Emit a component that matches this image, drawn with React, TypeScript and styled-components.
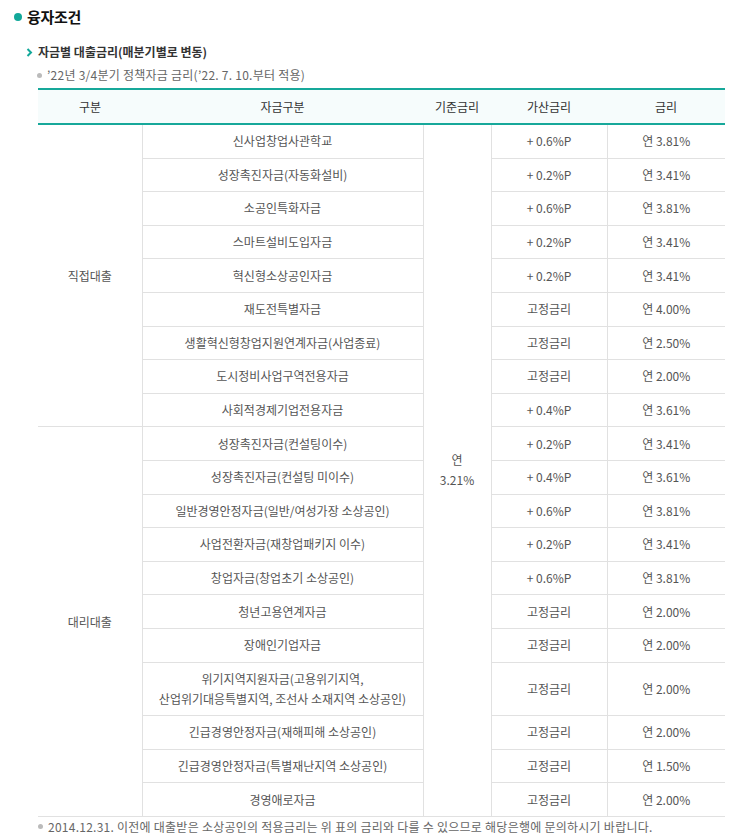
import React from "react";
import styled, { createGlobalStyle } from "styled-components";

const Global = createGlobalStyle`
  html, body { margin: 0; padding: 0; background: #fff; }
  body { font-family: "Noto Sans CJK KR", "Noto Sans", sans-serif; color: #555; }
`;

const Page = styled.div`
  padding: 6px 13px 0 14px;
  width: 738px;
  box-sizing: border-box;
`;

const Title = styled.h2`
  display: flex;
  align-items: center;
  gap: 5px;
  margin: 0;
  font-size: 15px;
  font-weight: 700;
  letter-spacing: -0.3px;
  color: #111;
  line-height: 22px;
`;

const Dot = styled.span`
  width: 8px;
  height: 8px;
  border-radius: 50%;
  background: #12a89a;
  display: inline-block;
`;

const Section = styled.div`
  padding-left: 12px;
  margin-top: 15px;
`;

const SubTitle = styled.h3`
  display: flex;
  align-items: center;
  gap: 5px;
  margin: 0;
  font-size: 12px;
  font-weight: 700;
  letter-spacing: 0;
  color: #333;
  line-height: 18px;
`;

const Note = styled.p`
  display: flex;
  align-items: center;
  gap: 5px;
  margin: 5px 0 0 11px;
  font-size: 12px;
  letter-spacing: 0.25px;
  color: #666;
  line-height: 18px;
`;

const Bullet = styled.span`
  width: 5px;
  height: 5px;
  border-radius: 50%;
  background: #bbb;
  display: inline-block;
  flex: none;
`;

const Table = styled.table`
  margin: 4px 0 0 24px;
  width: 687px;
  border-collapse: collapse;
  table-layout: fixed;
  border-top: 2px solid #17a89a;
  font-size: 12px;
  letter-spacing: 0;
`;

const Th = styled.th`
  background: #f6fcfc;
  border-bottom: 2px solid #17a89a;
  font-weight: 400;
  color: #333;
  height: 33px;
  padding: 0;
  text-align: center;
`;

const Td = styled.td<{ $left?: boolean; $right?: boolean }>`
  border: 1px solid #e1e1e1;
  border-left: ${(p) => (p.$left ? "none" : "1px solid #e1e1e1")};
  border-right: ${(p) => (p.$right ? "none" : "1px solid #e1e1e1")};
  text-align: center;
  line-height: 20px;
  padding: 6.3px 4px;
  color: #555;
`;

const Foot = styled(Note)`
  margin: 1px 0 0 24px;
`;

type Row = [string, string, string];

const direct: Row[] = [
  ["신사업창업사관학교", "+ 0.6%P", "연 3.81%"],
  ["성장촉진자금(자동화설비)", "+ 0.2%P", "연 3.41%"],
  ["소공인특화자금", "+ 0.6%P", "연 3.81%"],
  ["스마트설비도입자금", "+ 0.2%P", "연 3.41%"],
  ["혁신형소상공인자금", "+ 0.2%P", "연 3.41%"],
  ["재도전특별자금", "고정금리", "연 4.00%"],
  ["생활혁신형창업지원연계자금(사업종료)", "고정금리", "연 2.50%"],
  ["도시정비사업구역전용자금", "고정금리", "연 2.00%"],
  ["사회적경제기업전용자금", "+ 0.4%P", "연 3.61%"],
];

const agency: Row[] = [
  ["성장촉진자금(컨설팅이수)", "+ 0.2%P", "연 3.41%"],
  ["성장촉진자금(컨설팅 미이수)", "+ 0.4%P", "연 3.61%"],
  ["일반경영안정자금(일반/여성가장 소상공인)", "+ 0.6%P", "연 3.81%"],
  ["사업전환자금(재창업패키지 이수)", "+ 0.2%P", "연 3.41%"],
  ["창업자금(창업초기 소상공인)", "+ 0.6%P", "연 3.81%"],
  ["청년고용연계자금", "고정금리", "연 2.00%"],
  ["장애인기업자금", "고정금리", "연 2.00%"],
  ["위기지역지원자금(고용위기지역,\n산업위기대응특별지역, 조선사 소재지역 소상공인)", "고정금리", "연 2.00%"],
  ["긴급경영안정자금(재해피해 소상공인)", "고정금리", "연 2.00%"],
  ["긴급경영안정자금(특별재난지역 소상공인)", "고정금리", "연 1.50%"],
  ["경영애로자금", "고정금리", "연 2.00%"],
];

const Chevron = () => (
  <svg width="7" height="9" viewBox="0 0 7 9">
    <path d="M1.5 1 L5 4.5 L1.5 8" fill="none" stroke="#12a89a" strokeWidth="2" />
  </svg>
);

const Name = ({ text }: { text: string }) => (
  <>
    {text.split("\n").map((l, i) => (
      <React.Fragment key={i}>
        {i > 0 && <br />}
        {l}
      </React.Fragment>
    ))}
  </>
);

export default function App() {
  const total = direct.length + agency.length;
  return (
    <Page>
      <Global />
      <Title>
        <Dot />
        융자조건
      </Title>
      <Section>
        <SubTitle>
          <Chevron />
          자금별 대출금리(매분기별로 변동)
        </SubTitle>
        <Note>
          <Bullet />
          ’22년 3/4분기 정책자금 금리(’22. 7. 10.부터 적용)
        </Note>
      </Section>
      <Table>
        <colgroup>
          <col style={{ width: 104 }} />
          <col style={{ width: 281 }} />
          <col style={{ width: 68 }} />
          <col style={{ width: 116 }} />
          <col style={{ width: 118 }} />
        </colgroup>
        <thead>
          <tr>
            <Th>구분</Th>
            <Th>자금구분</Th>
            <Th>기준금리</Th>
            <Th>가산금리</Th>
            <Th>금리</Th>
          </tr>
        </thead>
        <tbody>
          {direct.map((r, i) => (
            <tr key={"d" + i}>
              {i === 0 && (
                <Td $left rowSpan={direct.length}>
                  직접대출
                </Td>
              )}
              <Td>{r[0]}</Td>
              {i === 0 && (
                <Td rowSpan={total}>
                  연<br />
                  3.21%
                </Td>
              )}
              <Td>{r[1]}</Td>
              <Td $right>{r[2]}</Td>
            </tr>
          ))}
          {agency.map((r, i) => (
            <tr key={"a" + i}>
              {i === 0 && (
                <Td $left rowSpan={agency.length}>
                  대리대출
                </Td>
              )}
              <Td>
                <Name text={r[0]} />
              </Td>
              <Td>{r[1]}</Td>
              <Td $right>{r[2]}</Td>
            </tr>
          ))}
        </tbody>
      </Table>
      <Foot>
        <Bullet />
        2014.12.31. 이전에 대출받은 소상공인의 적용금리는 위 표의 금리와 다를 수 있으므로 해당은행에 문의하시기 바랍니다.
      </Foot>
    </Page>
  );
}
